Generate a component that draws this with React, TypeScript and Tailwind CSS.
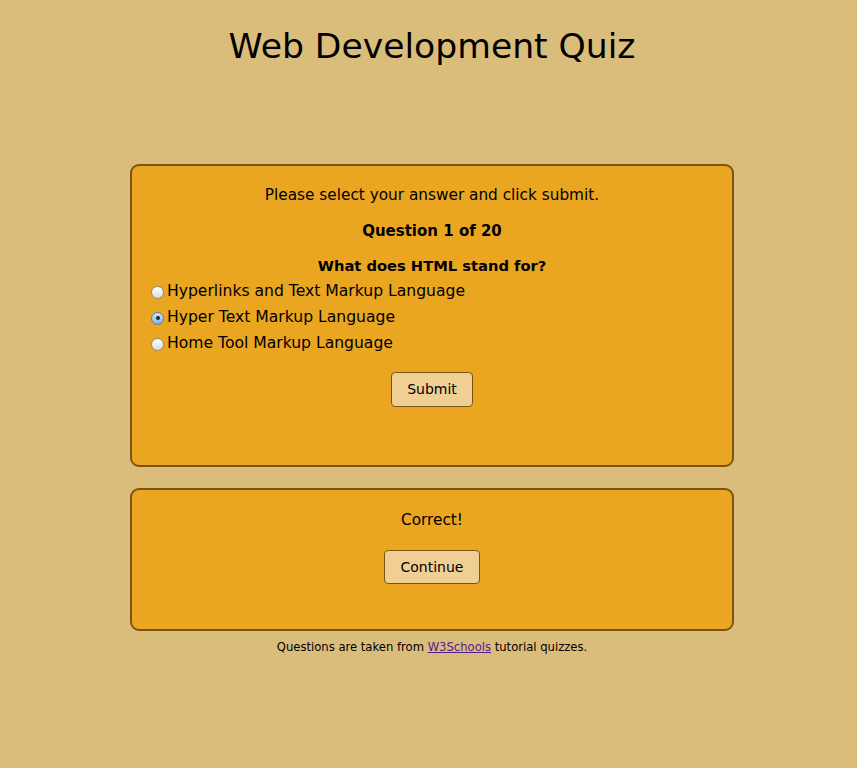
import { useState } from "react";

const options = [
  "Hyperlinks and Text Markup Language",
  "Hyper Text Markup Language",
  "Home Tool Markup Language",
];

function Radio({ checked }: { checked: boolean }) {
  if (checked) {
    return (
      <span className="flex h-[13px] w-[13px] shrink-0 items-center justify-center rounded-full border border-[#5a7a9a] bg-gradient-to-b from-[#cfe6fb] to-[#7ab4e8]">
        <span className="h-[4px] w-[4px] rounded-full bg-[#1c2530]" />
      </span>
    );
  }
  return (
    <span className="h-[13px] w-[13px] shrink-0 rounded-full border border-[#8a8a8a] bg-gradient-to-b from-[#ffffff] to-[#dcdcdc]" />
  );
}

export default function App() {
  const [selected, setSelected] = useState(1);

  return (
    <div
      className="min-h-[768px] bg-[#dbbd7b] pl-[7px] text-black"
      style={{ fontFamily: '"DejaVu Sans", Verdana, sans-serif' }}
    >
      <h1 className="pt-[24px] text-center text-[34.6px] leading-[44px] font-normal">
        Web Development Quiz
      </h1>

      <div className="mx-auto mt-[96px] w-[604px]">
        <div className="rounded-[9px] border-2 border-[#7c5410] bg-[#eaa620] pt-[19px] pb-[58px]">
          <p className="text-center text-[15.3px] leading-[20px]">
            Please select your answer and click submit.
          </p>
          <p className="mt-[16px] text-center text-[15px] leading-[20px] font-bold">
            Question 1 of 20
          </p>
          <p className="mt-[15px] text-center text-[14.7px] leading-[20px] font-bold">
            What does HTML stand for?
          </p>
          <div className="mt-[3px] pl-[19px]">
            {options.map((o, i) => (
              <label
                key={o}
                className="flex h-[26px] cursor-default items-center gap-[3px] text-[15.6px]"
                onClick={() => setSelected(i)}
              >
                <Radio checked={selected === i} />
                <span>{o}</span>
              </label>
            ))}
          </div>
          <div className="mt-[15px] flex justify-center">
            <button className="h-[35px] w-[82px] rounded-[4px] border border-[#7c5410] bg-[#efcf94] text-[14px]">
              Submit
            </button>
          </div>
        </div>

        <div className="mt-[21px] rounded-[9px] border-2 border-[#7c5410] bg-[#eaa620] pt-[20px] pb-[45px]">
          <p className="text-center text-[15.3px] leading-[20px]">Correct!</p>
          <div className="mt-[20px] flex justify-center">
            <button className="h-[34px] w-[96px] rounded-[4px] border border-[#7c5410] bg-[#efcf94] text-[14px]">
              Continue
            </button>
          </div>
        </div>

        <p className="mt-[8px] text-center text-[11.6px] leading-[16px]">
          Questions are taken from{" "}
          <a href="#" className="text-[#551a8b] underline">
            W3Schools
          </a>{" "}
          tutorial quizzes.
        </p>
      </div>
    </div>
  );
}
